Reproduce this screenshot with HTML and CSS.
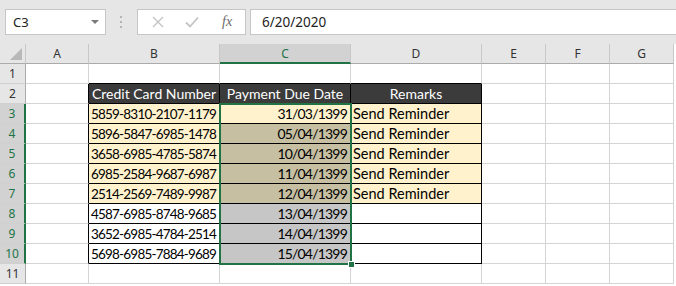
FILE: index.html
```html
<!DOCTYPE html>
<html lang="en">
<head>
  <meta charset="UTF-8">
  <title>Payment Reminders - Sheet</title>
  <link rel="stylesheet" href="styles.css">
</head>
<body>

  <div class="toolbar">
    <div class="namebox">
      <span>C3</span>
      <span class="caret"></span>
    </div>
    <div class="grip">
      <svg width="3" height="12" viewBox="0 0 3 12"><rect x="0" y="0" width="2" height="2"/><rect x="0" y="5" width="2" height="2"/><rect x="0" y="10" width="2" height="2"/></svg>
    </div>
    <div class="fxbtns">
      <svg class="ico" width="12" height="12" viewBox="0 0 12 12"><path d="M1 1 L11 11 M11 1 L1 11" stroke="#c4c4c4" stroke-width="1.4" fill="none"/></svg>
      <svg class="ico" width="14" height="12" viewBox="0 0 14 12"><path d="M1 6.5 L5 10.5 L13 1.5" stroke="#c4c4c4" stroke-width="1.8" fill="none"/></svg>
      <span class="fx">fx</span>
    </div>
    <div class="formula">6/20/2020</div>
  </div>

  <div class="sheet">
    <!-- column headers -->
    <div class="corner"></div>
    <div class="hd">A</div>
    <div class="hd">B</div>
    <div class="hd on">C</div>
    <div class="hd">D</div>
    <div class="hd">E</div>
    <div class="hd">F</div>
    <div class="hd">G</div>

    <!-- row 1 -->
    <div class="rh">1</div>
    <div class="c"></div>
    <div class="c bt"></div>
    <div class="c bt"></div>
    <div class="c bt"></div>
    <div class="c"></div>
    <div class="c"></div>
    <div class="c"></div>

    <!-- row 2 -->
    <div class="rh">2</div>
    <div class="c bl"></div>
    <div class="c tb th">Credit Card Number</div>
    <div class="c tb th">Payment Due Date</div>
    <div class="c tb th">Remarks</div>
    <div class="c"></div>
    <div class="c"></div>
    <div class="c"></div>

    <div class="rh on">3</div>
    <div class="c bl"></div>
    <div class="c tb y card">5859-8310-2107-1179</div>
    <div class="c tb y num">31/03/1399</div>
    <div class="c tb y">Send Reminder</div>
    <div class="c"></div>
    <div class="c"></div>
    <div class="c"></div>

    <div class="rh on">4</div>
    <div class="c bl"></div>
    <div class="c tb y card">5896-5847-6985-1478</div>
    <div class="c tb ys num">05/04/1399</div>
    <div class="c tb y">Send Reminder</div>
    <div class="c"></div>
    <div class="c"></div>
    <div class="c"></div>

    <div class="rh on">5</div>
    <div class="c bl"></div>
    <div class="c tb y card">3658-6985-4785-5874</div>
    <div class="c tb ys num">10/04/1399</div>
    <div class="c tb y">Send Reminder</div>
    <div class="c"></div>
    <div class="c"></div>
    <div class="c"></div>

    <div class="rh on">6</div>
    <div class="c bl"></div>
    <div class="c tb y card">6985-2584-9687-6987</div>
    <div class="c tb ys num">11/04/1399</div>
    <div class="c tb y">Send Reminder</div>
    <div class="c"></div>
    <div class="c"></div>
    <div class="c"></div>

    <div class="rh on">7</div>
    <div class="c bl"></div>
    <div class="c tb y card">2514-2569-7489-9987</div>
    <div class="c tb ys num">12/04/1399</div>
    <div class="c tb y">Send Reminder</div>
    <div class="c"></div>
    <div class="c"></div>
    <div class="c"></div>

    <div class="rh on">8</div>
    <div class="c bl"></div>
    <div class="c tb card">4587-6985-8748-9685</div>
    <div class="c tb gs num">13/04/1399</div>
    <div class="c tb"></div>
    <div class="c"></div>
    <div class="c"></div>
    <div class="c"></div>

    <div class="rh on">9</div>
    <div class="c bl"></div>
    <div class="c tb card">3652-6985-4784-2514</div>
    <div class="c tb gs num">14/04/1399</div>
    <div class="c tb"></div>
    <div class="c"></div>
    <div class="c"></div>
    <div class="c"></div>

    <div class="rh on">10</div>
    <div class="c bl"></div>
    <div class="c tb card">5698-6985-7884-9689</div>
    <div class="c tb gs num">15/04/1399</div>
    <div class="c tb"></div>
    <div class="c"></div>
    <div class="c"></div>
    <div class="c"></div>

    <div class="rh">11</div>
    <div class="c"></div>
    <div class="c"></div>
    <div class="c"></div>
    <div class="c"></div>
    <div class="c"></div>
    <div class="c"></div>
    <div class="c"></div>

    <!-- selected range C3:C10 -->
    <div class="selection"></div>
    <div class="handle"></div>
  </div>

</body>
</html>
```

FILE: styles.css
```css
:root {
  --green: #217346;
  --grid: #d4d4d4;
  --chrome: #e6e6e6;
  --yellow: #fff2cc;
}
* {
  margin: 0;
  padding: 0;
  box-sizing: border-box;
}
body {
  width: 676px;
  height: 286px;
  overflow: hidden;
  background: #fff;
  font-family: 'Lato', sans-serif;
}

/* formula bar */
.toolbar {
  height: 44px;
  background: var(--chrome);
  display: flex;
  align-items: flex-start;
  padding-top: 9px;
  padding-left: 5px;
}
.namebox {
  width: 101px;
  height: 26px;
  background: #fff;
  border: 1px solid #c6c6c6;
  display: flex;
  align-items: center;
  justify-content: space-between;
  padding: 0 6px 0 7px;
  font-family: 'Noto Sans', sans-serif;
  font-size: 13px;
  color: #222;
}
.caret {
  width: 0;
  height: 0;
  border-left: 4px solid transparent;
  border-right: 4px solid transparent;
  border-top: 4px solid #7a7a7a;
}
.grip {
  width: 31px;
  height: 26px;
  display: flex;
  align-items: center;
  justify-content: center;
  fill: #b4b4b4;
}
.fxbtns {
  width: 109px;
  height: 26px;
  background: #fff;
  border: 1px solid #c6c6c6;
  display: flex;
  align-items: center;
  padding-left: 14px;
}
.fxbtns .ico {
  margin-right: 21px;
}
.fx {
  font-family: 'Liberation Serif', serif;
  font-style: italic;
  font-size: 14px;
  color: #6a6a6a;
  margin-left: 2px;
}
.formula {
  flex: 1;
  height: 26px;
  margin-left: 4px;
  margin-right: -4px;
  background: #fff;
  border: 1px solid #c6c6c6;
  padding-left: 11px;
  font-family: 'Noto Sans', sans-serif;
  font-size: 13.5px;
  line-height: 24px;
  color: #222;
}

/* grid */
.sheet {
  position: relative;
  display: grid;
  grid-template-columns: 26px 63px 131px 131px 131px 64px 64px 64px;
  grid-auto-rows: 20px;
}
.corner, .hd {
  background: var(--chrome);
  border-bottom: 1px solid #ababab;
  border-right: 1px solid #c8c8c8;
}
.corner {
  position: relative;
}
.corner::after {
  content: "";
  position: absolute;
  right: 3px;
  bottom: 3px;
  border-left: 12px solid transparent;
  border-bottom: 12px solid #b8b8b8;
}
.hd {
  text-align: center;
  font-family: 'Noto Sans', sans-serif;
  font-size: 12px;
  line-height: 20px;
  color: #333;
}
.hd.on {
  background: #d2d2d2;
  color: var(--green);
  border-bottom: 2px solid var(--green);
}
.rh {
  background: var(--chrome);
  border-right: 1px solid #ababab;
  border-bottom: 1px solid #d0d0d0;
  text-align: center;
  font-family: 'Noto Sans', sans-serif;
  font-size: 12px;
  line-height: 20px;
  color: #333;
}
.rh.on {
  background: #d2d2d2;
  color: var(--green);
  border-right: 2px solid var(--green);
}

.c {
  border-right: 1px solid var(--grid);
  border-bottom: 1px solid var(--grid);
  font-size: 14.5px;
  line-height: 20px;
  padding: 0 2px;
  white-space: nowrap;
  overflow: hidden;
  color: #000;
}
.bl {
  border-right-color: #000;
}
.bt {
  border-bottom-color: #000;
}
.tb {
  border-right-color: #000;
  border-bottom-color: #000;
}
.th {
  background: #3b3b3b;
  color: #fff;
  font-size: 14px;
  text-align: center;
}
.y {
  background: var(--yellow);
}
.ys {
  background: #c6bfa1;
}
.gs {
  background: #c6c6c6;
}
.card, .num {
  font-size: 14px;
  letter-spacing: -0.8px;
}
.card {
  font-size: 13.5px;
}
.num {
  text-align: right;
  padding-right: 3px;
}

.selection {
  position: absolute;
  left: 219px;
  top: 59px;
  width: 133px;
  height: 162px;
  border: 2px solid var(--green);
}
.handle {
  position: absolute;
  left: 348px;
  top: 217px;
  width: 7px;
  height: 7px;
  background: var(--green);
  border: 1px solid #fff;
}
```
